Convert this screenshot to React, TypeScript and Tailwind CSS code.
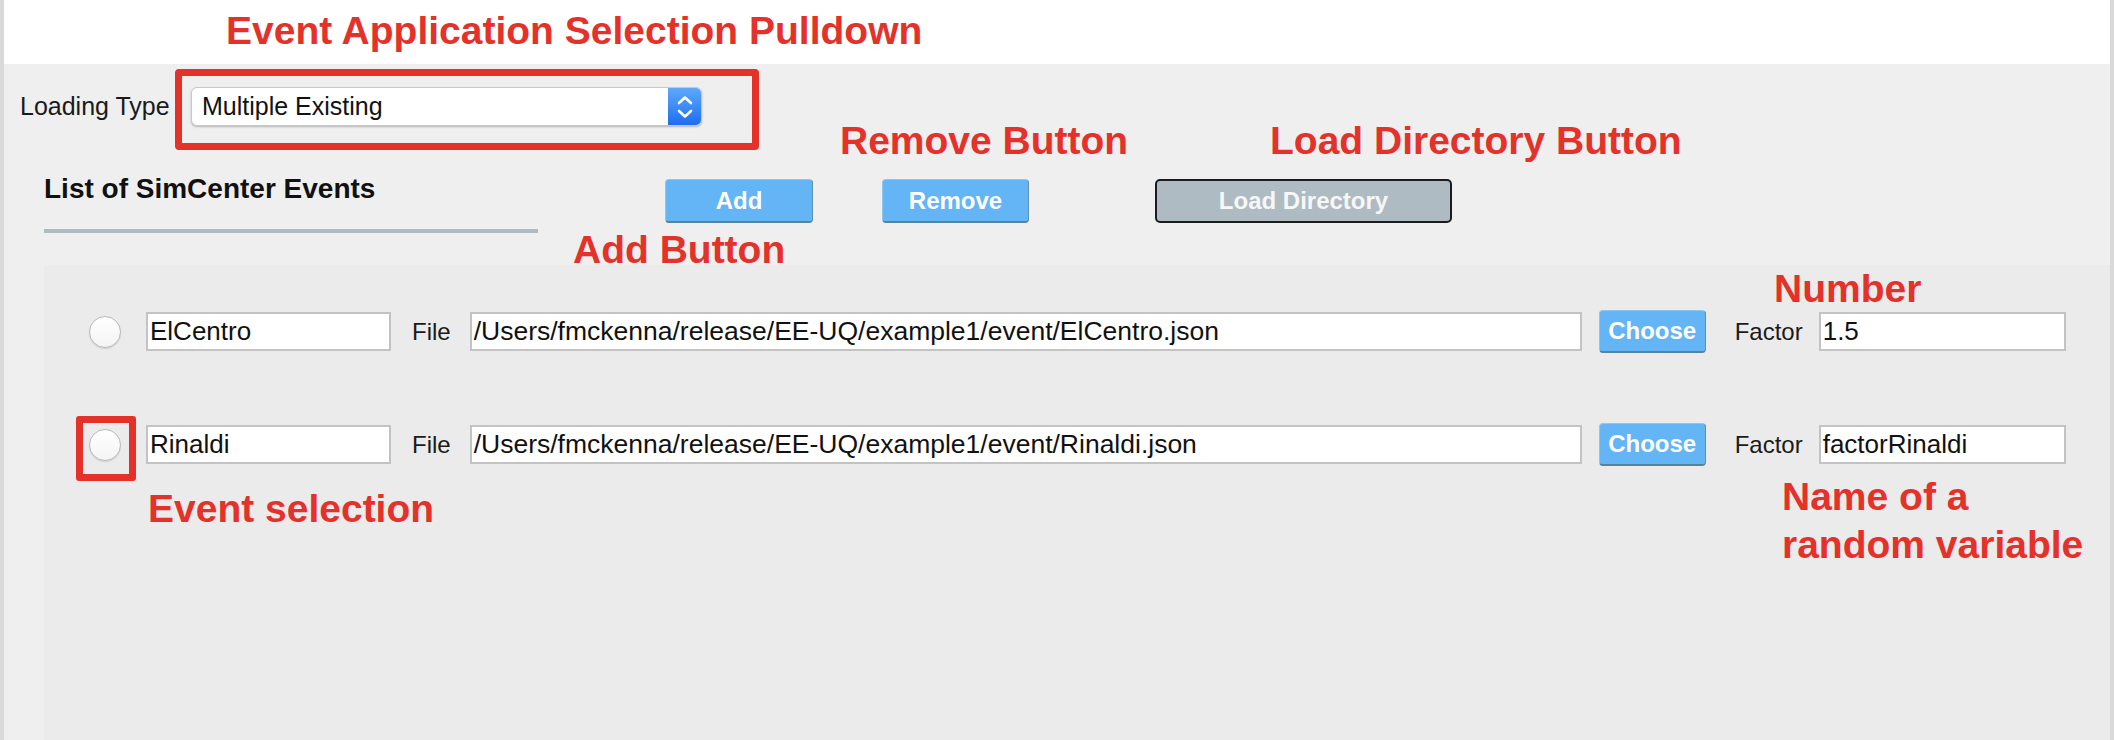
import React from 'react';

type Row = {
  name: string;
  path: string;
  factor: string;
};

const rows: Row[] = [
  { name: 'ElCentro', path: '/Users/fmckenna/release/EE-UQ/example1/event/ElCentro.json', factor: '1.5' },
  { name: 'Rinaldi', path: '/Users/fmckenna/release/EE-UQ/example1/event/Rinaldi.json', factor: 'factorRinaldi' },
];

function Note({ className, children }: { className: string; children: React.ReactNode }) {
  return (
    <div className={`absolute whitespace-nowrap text-[39px] font-bold leading-[39px] text-[#e4322a] ${className}`}>
      {children}
    </div>
  );
}

function BlueButton({ label, className }: { label: string; className: string }) {
  return (
    <button
      className={`flex items-center justify-center rounded-[4px] border border-[#8fc6ee] border-r-[#5d8fb0] border-b-2 border-b-[#55849f] bg-[#64b5f6] text-[24px] font-bold text-white ${className}`}
    >
      {label}
    </button>
  );
}

function EventRow({ row }: { row: Row }) {
  return (
    <div className="flex h-[39px] items-center">
      <div className="h-[32px] w-[32px] shrink-0 rounded-full border border-[#b9b9b9] bg-gradient-to-b from-white to-[#f4f4f4] shadow-[0_1px_1px_rgba(0,0,0,0.12)]" />
      <div className="ml-[25px] flex h-[39px] w-[245px] items-center border-2 border-[#c3c3c3] bg-white pl-[2px] text-[26px] text-[#111]">
        {row.name}
      </div>
      <span className="ml-[21px] text-[24px] text-[#1a1a1a]">File</span>
      <div className="ml-[19px] flex h-[39px] w-[1112px] items-center border-2 border-[#c3c3c3] bg-white pl-[2px] text-[26.5px] text-[#111]">
        {row.path}
      </div>
      <BlueButton label="Choose" className="ml-[17px] h-[43px] w-[107px]" />
      <span className="ml-[29px] text-[24px] text-[#1a1a1a]">Factor</span>
      <div className="ml-[16px] flex h-[39px] w-[247px] items-center border-2 border-[#c3c3c3] bg-white pl-[2px] text-[26px] text-[#111]">
        {row.factor}
      </div>
    </div>
  );
}

export default function App() {
  return (
    <div className="relative flex h-[740px] w-[2114px] flex-col overflow-hidden border-x-4 border-[#d9d9d9] bg-white font-['Liberation_Sans',Arial,sans-serif]">
      <div className="h-[64px] shrink-0 bg-white" />

      <div className="flex flex-1 flex-col bg-[#efefef]">
        {/* loading type */}
        <div className="flex items-center pl-[16px] pt-[23px]">
          <span className="w-[171px] shrink-0 text-[25px] text-[#1a1a1a]">Loading Type</span>
          <div className="flex h-[39px] w-[511px] overflow-hidden rounded-[6px] border border-[#c9c9c9] bg-white shadow-[0_1px_2px_rgba(0,0,0,0.25)]">
            <div className="flex flex-1 items-center pl-[10px] text-[25px] text-[#111]">Multiple Existing</div>
            <div className="flex w-[33px] items-center justify-center bg-gradient-to-b from-[#5ea8fb] to-[#1c6df1]">
              <svg width="18" height="24" viewBox="0 0 18 24" fill="none" stroke="white" strokeWidth="2.6" strokeLinecap="round" strokeLinejoin="round">
                <path d="M3 8 L9 2.5 L15 8" />
                <path d="M3 16 L9 21.5 L15 16" />
              </svg>
            </div>
          </div>
        </div>

        {/* header + buttons */}
        <div className="mt-[47px] flex items-start pl-[40px]">
          <div className="w-[494px] shrink-0">
            <div className="text-[28px] font-bold leading-[32px] text-[#111]">List of SimCenter Events</div>
            <div className="mt-[24px] h-[4px] bg-[#aebbc1]" />
          </div>
          <BlueButton label="Add" className="ml-[127px] mt-[6px] h-[44px] w-[148px]" />
          <BlueButton label="Remove" className="ml-[69px] mt-[6px] h-[44px] w-[147px]" />
          <button className="ml-[126px] mt-[6px] flex h-[44px] w-[297px] items-center justify-center rounded-[5px] border-2 border-[#1c1c1c] bg-[#aebbc3] text-[24px] font-bold text-[#f7f7f7]">
            Load Directory
          </button>
        </div>

        {/* event list */}
        <div className="ml-[40px] mt-[32px] flex flex-1 flex-col gap-[74px] bg-[#ebebeb] pl-[45px] pt-[47px]">
          {rows.map((r) => (
            <EventRow key={r.name} row={r} />
          ))}
        </div>
      </div>

      {/* annotations */}
      <div className="absolute left-[171px] top-[69px] h-[81px] w-[584px] rounded-[4px] border-[7px] border-[#e4322a]" />
      <div className="absolute left-[72px] top-[416px] h-[65px] w-[60px] rounded-[3px] border-[7px] border-[#e4322a]" />

      <Note className="left-[222px] top-[11px] text-[39.5px]">Event Application Selection Pulldown</Note>
      <Note className="left-[836px] top-[121px]">Remove Button</Note>
      <Note className="left-[1266px] top-[121px]">Load Directory Button</Note>
      <Note className="left-[569px] top-[230px]">Add Button</Note>
      <Note className="left-[1770px] top-[269px]">Number</Note>
      <Note className="left-[144px] top-[489px]">Event selection</Note>
      <div className="absolute left-[1778px] top-[473px] text-[39px] font-bold leading-[48px] text-[#e4322a]">
        Name of a
        <br />
        random variable
      </div>
    </div>
  );
}
